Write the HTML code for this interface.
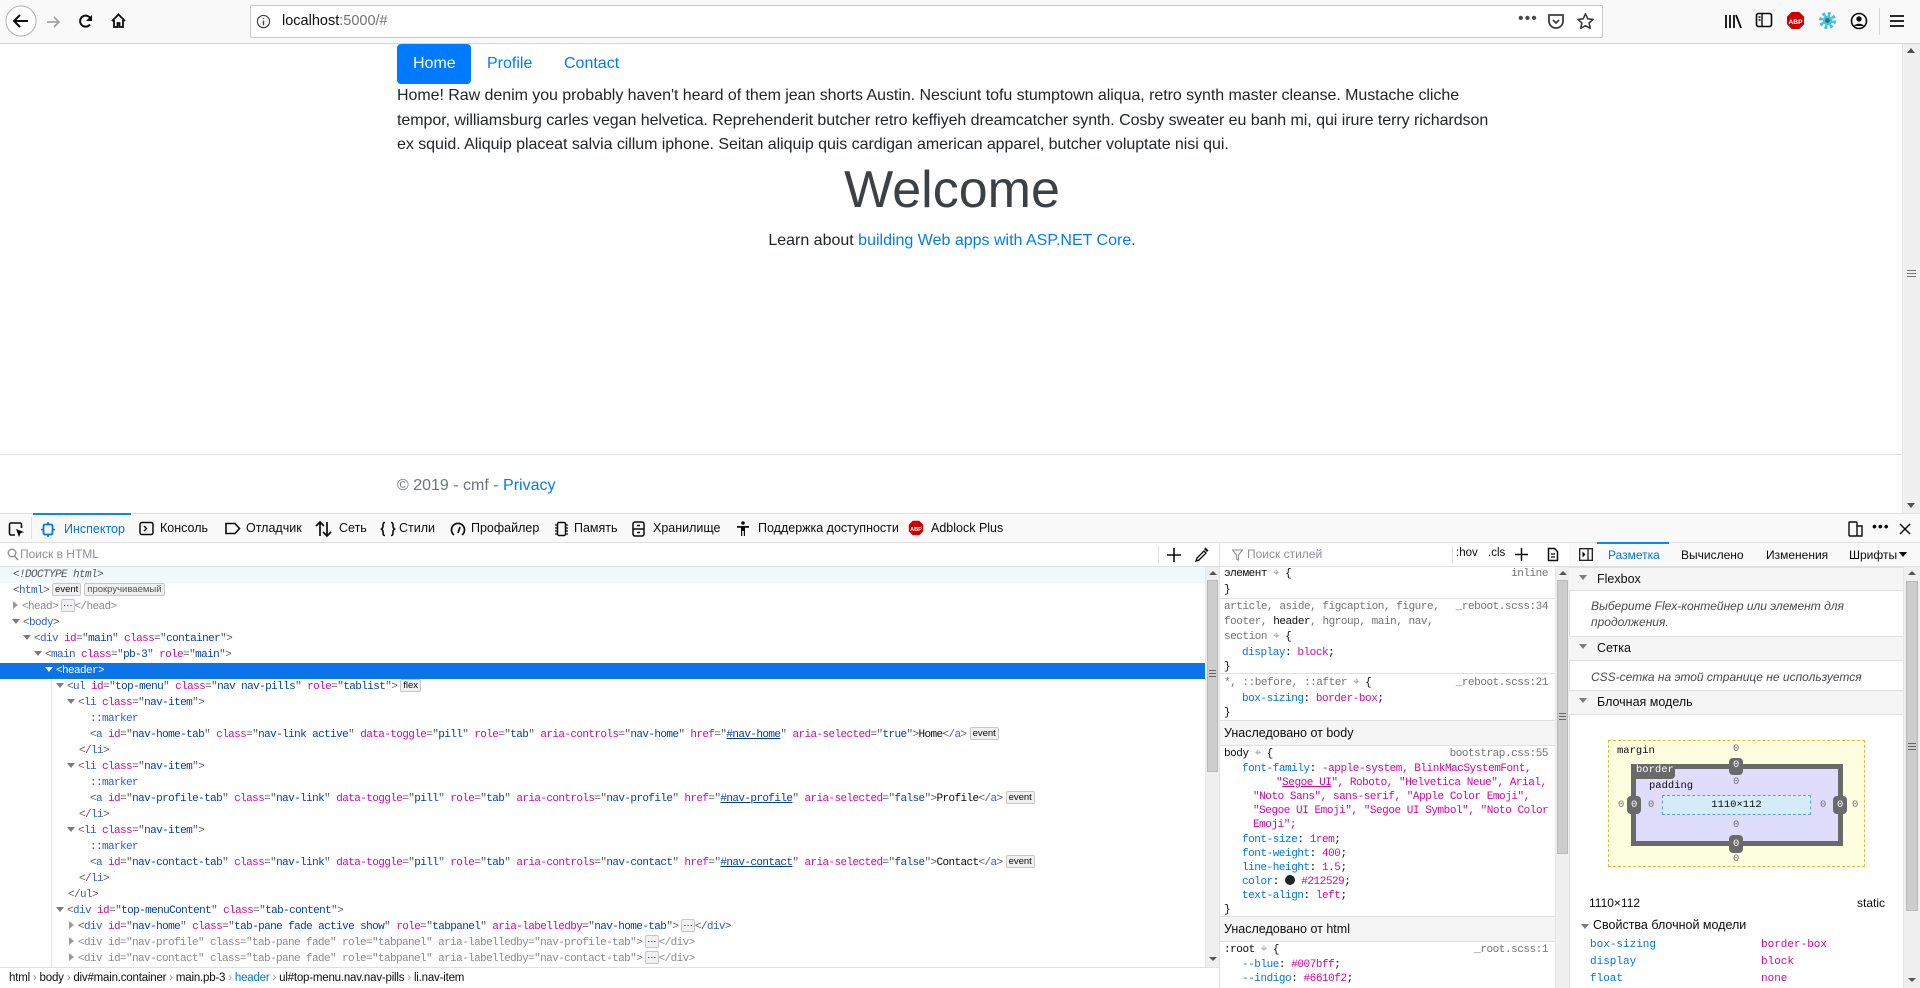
<!DOCTYPE html>
<html><head><meta charset="utf-8">
<style>
*{box-sizing:border-box;margin:0;padding:0}
body{width:1920px;height:988px;overflow:hidden;position:relative;background:#fff;font-family:"Liberation Sans","Noto Sans CJK SC",sans-serif;color:#0c0c0d}
.a{position:absolute}
.mono{font-family:"Liberation Mono","DejaVu Sans Mono",monospace}
#tb{left:0;top:0;width:1920px;height:44px;background:#f9f9fa;border-bottom:1px solid #d7d7db}
#url{left:250px;top:5px;width:1353px;height:33px;background:#fff;border:1px solid #c9c9cc;border-radius:2px}
.ico{position:absolute}
#page{left:0;top:44px;width:1902px;height:469px;background:#fff;font-size:16px;color:#212529}
.pill{position:absolute;top:0;height:40px;line-height:40px;font-size:16px;color:#007bff}
#vs{left:1902px;top:44px;width:18px;height:469px;background:#f0f0f0;border-left:1px solid #e6e6e6}
#dtb{left:0;top:513px;width:1920px;height:30px;background:#f9f9fa;border-top:1px solid #e0e0e2;border-bottom:1px solid #e0e0e2;font-size:12.5px;color:#0c0c0d}
.tab{position:absolute;top:0;height:29px;line-height:29px;white-space:nowrap}
.tab svg{position:absolute;top:7px}
.row{position:absolute;left:0;height:16px;line-height:16px;white-space:nowrap;font-size:11px;letter-spacing:-.6px;color:#585959}
.tg{color:#2e5bd8}.an{color:#dd00a9}.av{color:#003eaa}.gr{color:#8a8a8d}
.badge{display:inline-block;font-family:"Liberation Sans",sans-serif;letter-spacing:0;font-size:9.5px;line-height:11px;padding:0 2px;border:1px solid #c7c7ca;background:#f0f0f2;border-radius:2px;color:#0c0c0d;vertical-align:1px;margin-left:3px}
.tri{display:inline-block;width:0;height:0;border-left:4px solid transparent;border-right:4px solid transparent;border-top:5px solid #7c7c7d;margin-right:3px;vertical-align:1px}
.trr{display:inline-block;width:0;height:0;border-top:4px solid transparent;border-bottom:4px solid transparent;border-left:5px solid #9a9a9d;margin-right:4px;vertical-align:0}
.sl{position:absolute;left:1224px;height:16px;line-height:16px;font-size:11px;letter-spacing:-.45px;white-space:nowrap;color:#0c0c0d}
.pn{color:#0074e8}.pv{color:#dd00a9}.src{position:absolute;right:0;color:#737373}
.hd{position:absolute;left:1220px;width:335px;background:#f5f5f6;border-top:1px solid #e0e0e2;border-bottom:1px solid #e0e0e2;font-size:12.5px;padding-left:4px}
.sec{position:absolute;left:1569px;width:334px;background:#f5f5f6;border-top:1px solid #e0e0e2;border-bottom:1px solid #e0e0e2;font-size:12.5px;padding-left:28px;line-height:18px}
.sec .tri{position:absolute;left:10px;top:7px}
.it{position:absolute;left:1591px;font-style:italic;font-size:12px;color:#4a4a4f;line-height:16px}
.bm{font-family:"Liberation Mono",monospace;font-size:10.5px;position:absolute}
</style></head><body>

<div id="tb" class="a">
  <svg class="ico" style="left:5px;top:5px" width="32" height="32" viewBox="0 0 32 32"><circle cx="16" cy="16" r="15" fill="#fff" stroke="#b1b1b3"/><path d="M23 16H10M15 10l-6 6 6 6" stroke="#0c0c0d" stroke-width="2" fill="none"/></svg>
  <svg class="ico" style="left:45px;top:14px" width="16" height="16" viewBox="0 0 16 16"><path d="M2 8h12M9 3l5 5-5 5" stroke="#a4a4a6" stroke-width="1.8" fill="none"/></svg>
  <svg class="ico" style="left:78px;top:13px" width="16" height="16" viewBox="0 0 16 16"><path d="M13 7A5.5 5.5 0 1 0 12 11.5" stroke="#0c0c0d" stroke-width="2" fill="none"/><path d="M14 2v6H8z" fill="#0c0c0d"/></svg>
  <svg class="ico" style="left:110px;top:12px" width="17" height="17" viewBox="0 0 17 17"><path d="M2 9L8.5 2.5 15 9M4 8v7h3.5v-4h2v4H13V8" stroke="#0c0c0d" stroke-width="1.8" fill="none"/></svg>
  <div id="url" class="a">
    <svg class="ico" style="left:5px;top:8px" width="15" height="15" viewBox="0 0 16 16"><circle cx="8" cy="8" r="6.5" stroke="#3d3d3f" fill="none" stroke-width="1.2"/><path d="M8 7v5M8 4.5v1" stroke="#3d3d3f" stroke-width="1.5"/></svg>
    <div class="a" style="left:31px;top:7px;font-size:14.5px;color:#0c0c0d">localhost<span style="color:#737373">:5000/#</span></div>
    <div class="a" style="left:1267px;top:4px;font-size:16px;color:#4a4a4f;letter-spacing:1px">•••</div>
    <svg class="ico" style="left:1296px;top:7px" width="18" height="17" viewBox="0 0 18 17"><path d="M2 2h14v6a7 7 0 0 1-14 0z" stroke="#3d3d3f" stroke-width="1.8" fill="none"/><path d="M6 7l3 3 3-3" stroke="#3d3d3f" stroke-width="1.8" fill="none"/></svg>
    <svg class="ico" style="left:1325px;top:6px" width="19" height="19" viewBox="0 0 20 20"><path d="M10 2l2.4 5.2 5.6.6-4.2 3.8 1.2 5.6L10 14.4 5 17.2l1.2-5.6L2 7.8l5.6-.6z" stroke="#3d3d3f" stroke-width="1.7" fill="none" stroke-linejoin="round"/></svg>
  </div>
  <svg class="ico" style="left:1724px;top:13px" width="18" height="16" viewBox="0 0 18 16"><path d="M2 2v13M6 2v13M10 2v13M12 2l5 13" stroke="#0c0c0d" stroke-width="1.8"/></svg>
  <svg class="ico" style="left:1755px;top:12px" width="18" height="17" viewBox="0 0 18 17"><rect x="1.5" y="1.5" width="15" height="13" rx="2" stroke="#0c0c0d" stroke-width="1.6" fill="none"/><path d="M7 2v12M3.5 5h2M3.5 8h2" stroke="#0c0c0d" stroke-width="1.4"/></svg>
  <svg class="ico" style="left:1786px;top:11px" width="19" height="19" viewBox="0 0 20 20"><path d="M6 1h8l5 5v8l-5 5H6l-5-5V6z" fill="#d10000"/><text x="10" y="13.5" font-size="7" font-weight="bold" fill="#fff" text-anchor="middle" font-family="Liberation Sans">ABP</text></svg>
  <svg class="ico" style="left:1818px;top:11px" width="19" height="19" viewBox="0 0 20 20"><circle cx="10" cy="10" r="7" fill="none" stroke="#3fc4da" stroke-width="4" stroke-dasharray="3 2.5"/><circle cx="10" cy="10" r="5" fill="#3fc4da"/><circle cx="10" cy="10" r="2.5" fill="#2c6e80"/></svg>
  <svg class="ico" style="left:1850px;top:12px" width="18" height="18" viewBox="0 0 18 18"><circle cx="9" cy="9" r="7.5" stroke="#0c0c0d" stroke-width="1.6" fill="none"/><circle cx="9" cy="7" r="2.7" fill="#0c0c0d"/><path d="M4 14c1.5-3 8.5-3 10 0" fill="#0c0c0d"/></svg>
  <div class="a" style="left:1879px;top:8px;width:1px;height:27px;background:#d7d7db"></div>
  <svg class="ico" style="left:1889px;top:14px" width="16" height="14" viewBox="0 0 16 14"><path d="M1 2h14M1 7h14M1 12h14" stroke="#0c0c0d" stroke-width="1.8"/></svg>
</div>

<div id="page" class="a">
  <div class="a" style="left:397px;top:0;width:74px;height:40px;background:#007bff;border-radius:4px"></div>
  <div class="pill" style="left:413px;color:#fff">Home</div>
  <div class="pill" style="left:487px">Profile</div>
  <div class="pill" style="left:564px">Contact</div>
  <div class="a" style="left:397px;top:40px;line-height:24.5px;font-size:16px;white-space:nowrap;letter-spacing:-.05px">Home! Raw denim you probably haven't heard of them jean shorts Austin. Nesciunt tofu stumptown aliqua, retro synth master cleanse. Mustache cliche<br>tempor, williamsburg carles vegan helvetica. Reprehenderit butcher retro keffiyeh dreamcatcher synth. Cosby sweater eu banh mi, qui irure terry richardson<br>ex squid. Aliquip placeat salvia cillum iphone. Seitan aliquip quis cardigan american apparel, butcher voluptate nisi qui.</div>
  <div class="a" style="left:397px;width:1110px;top:114px;text-align:center;font-size:52px;font-weight:300;line-height:64px;color:#3c4146">Welcome</div>
  <div class="a" style="left:397px;width:1110px;top:185px;text-align:center;font-size:16px;line-height:24px">Learn about <span style="color:#007bff">building Web apps with ASP.NET Core</span>.</div>
  <div class="a" style="left:0;top:410px;width:1902px;height:1px;background:#dee2e6"></div>
  <div class="a" style="left:397px;top:430px;font-size:16px;line-height:24px;color:#6c757d">© 2019 - cmf - <span style="color:#007bff">Privacy</span></div>
</div>
<div id="vs" class="a">
  <div class="a" style="left:4px;top:4px;border-left:4px solid transparent;border-right:4px solid transparent;border-bottom:5px solid #505050"></div>
  <div class="a" style="left:4px;top:459px;border-left:4px solid transparent;border-right:4px solid transparent;border-top:5px solid #505050"></div>
  <div class="a" style="left:4px;top:226px;width:9px;height:1px;background:#777;box-shadow:0 3px 0 #777,0 6px 0 #777"></div>
</div>

<div id="dtb" class="a">
  <svg class="a" style="left:8px;top:7px" width="17" height="17" viewBox="0 0 17 17"><path d="M7 14H3a1.5 1.5 0 0 1-1.5-1.5v-9A1.5 1.5 0 0 1 3 2h9a1.5 1.5 0 0 1 1.5 1.5V7" stroke="#0c0c0d" stroke-width="1.6" fill="none"/><path d="M8 8l8 3-3.5 1.2L11 16z" fill="#0c0c0d"/></svg>
  <div class="a" style="left:31px;top:3px;width:1px;height:22px;background:#e0e0e2"></div>
  <div class="tab" style="left:33px;width:98px;border-top:2px solid #0a84ff;top:-1px;color:#0074e8"><svg style="left:8px" width="14" height="15" viewBox="0 0 14 15"><rect x="2.5" y="2.5" width="9" height="10" rx="1.5" stroke="#0074e8" stroke-width="1.8" fill="none"/><path d="M7 0v2.5M7 12.5V15M0 7.5h2.5M11.5 7.5H14" stroke="#0074e8" stroke-width="1.6"/></svg><span style="position:absolute;left:31px">Инспектор</span></div>
  <div class="tab" style="left:139px"><svg style="left:0" width="15" height="15" viewBox="0 0 15 15"><rect x="1" y="1.5" width="13" height="12" rx="2" stroke="#0c0c0d" stroke-width="1.5" fill="none"/><path d="M5 5l2.5 2.5L5 10" stroke="#0c0c0d" stroke-width="1.4" fill="none"/></svg><span style="position:absolute;left:21px">Консоль</span></div>
  <div class="tab" style="left:224px"><svg style="left:0" width="17" height="15" viewBox="0 0 17 15"><path d="M2 2.5h9l4.5 5-4.5 5H2z" stroke="#0c0c0d" stroke-width="1.6" fill="none"/></svg><span style="position:absolute;left:22px">Отладчик</span></div>
  <div class="tab" style="left:315px"><svg style="left:0" width="17" height="16" viewBox="0 0 17 16"><path d="M5 15V1M1 5l4-4 4 4M12 1v14M8 11l4 4 4-4" stroke="#0c0c0d" stroke-width="1.7" fill="none"/></svg><span style="position:absolute;left:24px">Сеть</span></div>
  <div class="tab" style="left:380px"><svg style="left:0" width="16" height="16" viewBox="0 0 16 16"><path d="M5 1.5C3 1.5 3 3 3 5s-1.5 3-1.5 3S3 9 3 11s0 3.5 2 3.5M11 1.5c2 0 2 1.5 2 3.5s1.5 3 1.5 3S13 9 13 11s0 3.5-2 3.5" stroke="#0c0c0d" stroke-width="1.6" fill="none"/></svg><span style="position:absolute;left:19px">Стили</span></div>
  <div class="tab" style="left:450px"><svg style="left:0" width="16" height="16" viewBox="0 0 16 16"><path d="M4 14A6.5 6.5 0 1 1 12 14" stroke="#0c0c0d" stroke-width="1.7" fill="none"/><path d="M8 12l2-6" stroke="#0c0c0d" stroke-width="1.7"/></svg><span style="position:absolute;left:21px">Профайлер</span></div>
  <div class="tab" style="left:554px"><svg style="left:0" width="15" height="16" viewBox="0 0 15 16"><rect x="3.5" y="1.5" width="8" height="13" rx="1.5" stroke="#0c0c0d" stroke-width="1.5" fill="none"/><path d="M1 4h2M1 7h2M1 10h2M1 13h2M12 4h2M12 7h2M12 10h2M12 13h2" stroke="#0c0c0d" stroke-width="1.2"/></svg><span style="position:absolute;left:20px">Память</span></div>
  <div class="tab" style="left:632px"><svg style="left:0" width="13" height="16" viewBox="0 0 13 16"><rect x="1" y="1" width="11" height="14" rx="2" stroke="#0c0c0d" stroke-width="1.5" fill="none"/><path d="M1 8h11M5 4.5h3M5 11.5h3" stroke="#0c0c0d" stroke-width="1.4"/></svg><span style="position:absolute;left:21px">Хранилище</span></div>
  <div class="tab" style="left:736px"><svg style="left:0" width="14" height="16" viewBox="0 0 14 16"><circle cx="7" cy="2" r="1.8" fill="#0c0c0d"/><path d="M1 5h12v1.8H9V15H7.8v-5H6.2v5H5V6.8H1z" fill="#0c0c0d"/></svg><span style="position:absolute;left:22px">Поддержка доступности</span></div>
  <div class="tab" style="left:908px"><svg style="left:0;top:6px" width="16" height="16" viewBox="0 0 20 20"><path d="M6 1h8l5 5v8l-5 5H6l-5-5V6z" fill="#d10000"/><text x="10" y="13.5" font-size="7" font-weight="bold" fill="#fff" text-anchor="middle" font-family="Liberation Sans">ABP</text></svg><span style="position:absolute;left:23px">Adblock Plus</span></div>
  <svg class="a" style="left:1848px;top:7px" width="15" height="16" viewBox="0 0 15 16"><rect x="1" y="1" width="8" height="14" rx="1" stroke="#0c0c0d" stroke-width="1.4" fill="none"/><path d="M9 5h5v10H9" stroke="#0c0c0d" stroke-width="1.4" fill="none"/></svg>
  <div class="a" style="left:1872px;top:4px;font-size:14px;letter-spacing:1px">•••</div>
  <svg class="a" style="left:1899px;top:9px" width="12" height="12" viewBox="0 0 12 12"><path d="M1 1l10 10M11 1L1 11" stroke="#0c0c0d" stroke-width="1.5"/></svg>
</div>

<div class="a" style="left:0;top:543px;width:1219px;height:445px;background:#fff"></div>
<div class="a" style="left:0;top:543px;width:1219px;height:24px;border-bottom:1px solid #e0e0e2">
  <svg class="a" style="left:7px;top:5px" width="12" height="13" viewBox="0 0 12 13"><circle cx="5" cy="5" r="3.8" stroke="#8f8f9d" stroke-width="1.4" fill="none"/><path d="M7.5 8l3.5 4" stroke="#8f8f9d" stroke-width="1.6"/></svg>
  <div class="a" style="left:20px;top:4px;font-size:12px;color:#8f8f9d">Поиск в HTML</div>
  <div class="a" style="left:1158px;top:3px;width:1px;height:17px;background:#e0e0e2"></div>
  <svg class="a" style="left:1167px;top:5px" width="14" height="14" viewBox="0 0 14 14"><path d="M7 0v14M0 7h14" stroke="#0c0c0d" stroke-width="1.6"/></svg>
  <svg class="a" style="left:1195px;top:4px" width="15" height="15" viewBox="0 0 15 15"><path d="M1 14l1-3 7-7 2 2-7 7z" stroke="#0c0c0d" stroke-width="1.3" fill="none"/><path d="M9 2l1.5-1.5 3 3L12 5z" fill="#0c0c0d"/></svg>
</div>
<div class="a mono" style="left:0;top:567px;width:1205px;height:400px;overflow:hidden">
  <div class="row" style="top:0;width:1205px;background:#f0f9fe;padding-left:13px;font-style:italic">&lt;!DOCTYPE html&gt;</div>
  <div class="row" style="top:16px;padding-left:13px">&lt;<span class="tg">html</span>&gt;<span class="badge">event</span><span class="badge" style="color:#555">прокручиваемый</span></div>
  <div class="row" style="top:32px;padding-left:13px"><span class="trr"></span><span class="gr">&lt;head&gt;</span><span class="badge" style="padding:0 1px">···</span><span class="gr">&lt;/head&gt;</span></div>
  <div class="row" style="top:48px;padding-left:12px"><span class="tri"></span>&lt;<span class="tg">body</span>&gt;</div>
  <div class="row" style="top:64px;padding-left:23px"><span class="tri"></span>&lt;<span class="tg">div</span> <span class="an">id</span>="<span class="av">main</span>" <span class="an">class</span>="<span class="av">container</span>"&gt;</div>
  <div class="row" style="top:80px;padding-left:34px"><span class="tri"></span>&lt;<span class="tg">main</span> <span class="an">class</span>="<span class="av">pb-3</span>" <span class="an">role</span>="<span class="av">main</span>"&gt;</div>
  <div class="row" style="top:96px;width:1205px;background:#0a74e8;color:#fff;padding-left:45px"><span class="tri" style="border-top-color:#fff"></span>&lt;header&gt;</div>
  <div class="row" style="top:112px;padding-left:56px"><span class="tri"></span>&lt;<span class="tg">ul</span> <span class="an">id</span>="<span class="av">top-menu</span>" <span class="an">class</span>="<span class="av">nav nav-pills</span>" <span class="an">role</span>="<span class="av">tablist</span>"&gt;<span class="badge">flex</span></div>
  <div class="row" style="top:128px;padding-left:67px"><span class="tri"></span>&lt;<span class="tg">li</span> <span class="an">class</span>="<span class="av">nav-item</span>"&gt;</div>
  <div class="row" style="top:144px;padding-left:90px"><span class="tg">::marker</span></div>
  <div class="row" style="top:160px;padding-left:90px">&lt;<span class="tg">a</span> <span class="an">id</span>="<span class="av">nav-home-tab</span>" <span class="an">class</span>="<span class="av">nav-link active</span>" <span class="an">data-toggle</span>="<span class="av">pill</span>" <span class="an">role</span>="<span class="av">tab</span>" <span class="an">aria-controls</span>="<span class="av">nav-home</span>" <span class="an">href</span>="<span class="av" style="text-decoration:underline">#nav-home</span>" <span class="an">aria-selected</span>="<span class="av">true</span>"&gt;<span style="color:#0c0c0d">Home</span>&lt;/<span class="tg">a</span>&gt;<span class="badge">event</span></div>
  <div class="row" style="top:176px;padding-left:79px">&lt;/<span class="tg">li</span>&gt;</div>
  <div class="row" style="top:192px;padding-left:67px"><span class="tri"></span>&lt;<span class="tg">li</span> <span class="an">class</span>="<span class="av">nav-item</span>"&gt;</div>
  <div class="row" style="top:208px;padding-left:90px"><span class="tg">::marker</span></div>
  <div class="row" style="top:224px;padding-left:90px">&lt;<span class="tg">a</span> <span class="an">id</span>="<span class="av">nav-profile-tab</span>" <span class="an">class</span>="<span class="av">nav-link</span>" <span class="an">data-toggle</span>="<span class="av">pill</span>" <span class="an">role</span>="<span class="av">tab</span>" <span class="an">aria-controls</span>="<span class="av">nav-profile</span>" <span class="an">href</span>="<span class="av" style="text-decoration:underline">#nav-profile</span>" <span class="an">aria-selected</span>="<span class="av">false</span>"&gt;<span style="color:#0c0c0d">Profile</span>&lt;/<span class="tg">a</span>&gt;<span class="badge">event</span></div>
  <div class="row" style="top:240px;padding-left:79px">&lt;/<span class="tg">li</span>&gt;</div>
  <div class="row" style="top:256px;padding-left:67px"><span class="tri"></span>&lt;<span class="tg">li</span> <span class="an">class</span>="<span class="av">nav-item</span>"&gt;</div>
  <div class="row" style="top:272px;padding-left:90px"><span class="tg">::marker</span></div>
  <div class="row" style="top:288px;padding-left:90px">&lt;<span class="tg">a</span> <span class="an">id</span>="<span class="av">nav-contact-tab</span>" <span class="an">class</span>="<span class="av">nav-link</span>" <span class="an">data-toggle</span>="<span class="av">pill</span>" <span class="an">role</span>="<span class="av">tab</span>" <span class="an">aria-controls</span>="<span class="av">nav-contact</span>" <span class="an">href</span>="<span class="av" style="text-decoration:underline">#nav-contact</span>" <span class="an">aria-selected</span>="<span class="av">false</span>"&gt;<span style="color:#0c0c0d">Contact</span>&lt;/<span class="tg">a</span>&gt;<span class="badge">event</span></div>
  <div class="row" style="top:304px;padding-left:79px">&lt;/<span class="tg">li</span>&gt;</div>
  <div class="row" style="top:320px;padding-left:68px">&lt;/<span class="tg">ul</span>&gt;</div>
  <div class="row" style="top:336px;padding-left:56px"><span class="tri"></span>&lt;<span class="tg">div</span> <span class="an">id</span>="<span class="av">top-menuContent</span>" <span class="an">class</span>="<span class="av">tab-content</span>"&gt;</div>
  <div class="row" style="top:352px;padding-left:69px"><span class="trr"></span>&lt;<span class="tg">div</span> <span class="an">id</span>="<span class="av">nav-home</span>" <span class="an">class</span>="<span class="av">tab-pane fade active show</span>" <span class="an">role</span>="<span class="av">tabpanel</span>" <span class="an">aria-labelledby</span>="<span class="av">nav-home-tab</span>"&gt;<span class="badge" style="padding:0 1px">···</span>&lt;/<span class="tg">div</span>&gt;</div>
  <div class="row gr" style="top:368px;padding-left:69px;color:#8a8a8d"><span class="trr"></span>&lt;div id="nav-profile" class="tab-pane fade" role="tabpanel" aria-labelledby="nav-profile-tab"&gt;<span class="badge" style="padding:0 1px">···</span>&lt;/div&gt;</div>
  <div class="row gr" style="top:384px;padding-left:69px;color:#8a8a8d"><span class="trr"></span>&lt;div id="nav-contact" class="tab-pane fade" role="tabpanel" aria-labelledby="nav-contact-tab"&gt;<span class="badge" style="padding:0 1px">···</span>&lt;/div&gt;</div>
  <div class="a" style="left:51px;top:112px;width:1px;height:290px;background:#e3e3e6"></div>
</div>
<div class="a" style="left:1205px;top:567px;width:14px;height:400px;background:#f0f0f0;border-left:1px solid #e6e6e6">
  <div class="a" style="left:3px;top:4px;border-left:4px solid transparent;border-right:4px solid transparent;border-bottom:4px solid #555"></div>
  <div class="a" style="left:1px;top:13px;width:11px;height:192px;background:#cdcdcd;border:1px solid #b8b8b8"></div>
  <div class="a" style="left:3px;top:103px;width:7px;height:1px;background:#666;box-shadow:0 3px 0 #666,0 6px 0 #666"></div>
  <div class="a" style="left:3px;top:390px;border-left:4px solid transparent;border-right:4px solid transparent;border-top:4px solid #555"></div>
</div>
<div class="a" style="left:0;top:967px;width:1219px;height:21px;border-top:1px solid #e0e0e2;background:#fff;font-size:11.5px;line-height:20px;color:#0c0c0d;padding-left:9px;white-space:nowrap;letter-spacing:-.2px">html <span style="color:#999">›</span> body <span style="color:#999">›</span> div#main.container <span style="color:#999">›</span> main.pb-3 <span style="color:#999">›</span> <span style="color:#0074e8">header</span> <span style="color:#999">›</span> ul#top-menu.nav.nav-pills <span style="color:#999">›</span> li.nav-item</div>

<div class="a" style="left:1219px;top:543px;width:1px;height:445px;background:#e0e0e2"></div>
<div class="a" style="left:1220px;top:543px;width:349px;height:24px;border-bottom:1px solid #e0e0e2">
  <svg class="a" style="left:12px;top:6px" width="11" height="12" viewBox="0 0 11 12"><path d="M.5 1h10L6.5 6v5L4.5 10V6z" stroke="#8f8f9d" stroke-width="1.1" fill="none"/></svg>
  <div class="a" style="left:27px;top:4px;font-size:12px;color:#8f8f9d">Поиск стилей</div>
  <div class="a" style="left:232px;top:3px;width:1px;height:17px;background:#e0e0e2"></div>
  <div class="a" style="left:236px;top:4px;font-size:11.5px">:hov</div>
  <div class="a" style="left:268px;top:4px;font-size:11.5px">.cls</div>
  <svg class="a" style="left:295px;top:5px" width="13" height="13" viewBox="0 0 14 14"><path d="M7 0v14M0 7h14" stroke="#0c0c0d" stroke-width="1.6"/></svg>
  <svg class="a" style="left:327px;top:4px" width="12" height="15" viewBox="0 0 12 15"><path d="M1.5 1.5h6l3 3v9h-9z" stroke="#0c0c0d" stroke-width="1.5" fill="none"/><path d="M4 7h4M4 10h4" stroke="#0c0c0d" stroke-width="1.2"/></svg>
</div>
<div class="a mono" style="left:0;top:0;width:1555px;height:988px;overflow:hidden;pointer-events:none">
  <div class="sl" style="top:566px;width:324px">элемент <span style="color:#999">⌖</span> {<span class="src">inline</span></div>
  <div class="sl" style="top:582px">}</div>
  <div class="a" style="left:1220px;top:598px;width:335px;height:1px;background:#e0e0e2"></div>
  <div class="sl" style="top:599px;width:324px;color:#737373">article, aside, figcaption, figure,<span class="src">_reboot.scss:34</span></div>
  <div class="sl" style="top:614px;color:#737373">footer, <span style="color:#0c0c0d">header</span>, hgroup, main, nav,</div>
  <div class="sl" style="top:629px;color:#737373">section <span style="color:#999">⌖</span> <span style="color:#0c0c0d">{</span></div>
  <div class="sl" style="top:645px;padding-left:18px"><span class="pn">display</span>: <span class="pv">block</span>;</div>
  <div class="sl" style="top:659px">}</div>
  <div class="a" style="left:1220px;top:673px;width:335px;height:1px;background:#e0e0e2"></div>
  <div class="sl" style="top:675px;width:324px;color:#737373">*, ::before, ::after <span style="color:#999">⌖</span> <span style="color:#0c0c0d">{</span><span class="src">_reboot.scss:21</span></div>
  <div class="sl" style="top:691px;padding-left:18px"><span class="pn">box-sizing</span>: <span class="pv">border-box</span>;</div>
  <div class="sl" style="top:705px">}</div>
  <div class="hd" style="top:720px;height:26px;line-height:24px;font-family:'Liberation Sans',sans-serif">Унаследовано от body</div>
  <div class="sl" style="top:746px;width:324px">body <span style="color:#999">⌖</span> {<span class="src">bootstrap.css:55</span></div>
  <div class="sl" style="top:761px;padding-left:18px"><span class="pn">font-family</span>: <span class="pv">-apple-system, BlinkMacSystemFont,</span></div>
  <div class="sl pv" style="top:775px;padding-left:52px">"<u>Segoe UI</u>", Roboto, "Helvetica Neue", Arial,</div>
  <div class="sl pv" style="top:789px;padding-left:29px">"Noto Sans", sans-serif, "Apple Color Emoji",</div>
  <div class="sl pv" style="top:803px;padding-left:29px">"Segoe UI Emoji", "Segoe UI Symbol", "Noto Color</div>
  <div class="sl pv" style="top:817px;padding-left:29px">Emoji";</div>
  <div class="sl" style="top:832px;padding-left:18px"><span class="pn">font-size</span>: <span class="pv">1rem</span>;</div>
  <div class="sl" style="top:846px;padding-left:18px"><span class="pn">font-weight</span>: <span class="pv">400</span>;</div>
  <div class="sl" style="top:860px;padding-left:18px"><span class="pn">line-height</span>: <span class="pv">1.5</span>;</div>
  <div class="sl" style="top:874px;padding-left:18px"><span class="pn">color</span>: <span style="display:inline-block;width:10px;height:10px;border-radius:50%;background:#212529;vertical-align:-1px"></span> <span class="pv">#212529</span>;</div>
  <div class="sl" style="top:888px;padding-left:18px"><span class="pn">text-align</span>: <span class="pv">left</span>;</div>
  <div class="sl" style="top:902px">}</div>
  <div class="hd" style="top:916px;height:26px;line-height:24px;font-family:'Liberation Sans',sans-serif">Унаследовано от html</div>
  <div class="sl" style="top:942px;width:324px">:root <span style="color:#999">⌖</span> {<span class="src">_root.scss:1</span></div>
  <div class="sl" style="top:957px;padding-left:18px"><span class="pn">--blue</span>: <span class="pv">#007bff</span>;</div>
  <div class="sl" style="top:971px;padding-left:18px"><span class="pn">--indigo</span>: <span class="pv">#6610f2</span>;</div>
</div>
<div class="a" style="left:1555px;top:567px;width:14px;height:421px;background:#f0f0f0;border-left:1px solid #e6e6e6">
  <div class="a" style="left:3px;top:4px;border-left:4px solid transparent;border-right:4px solid transparent;border-bottom:4px solid #555"></div>
  <div class="a" style="left:1px;top:13px;width:11px;height:274px;background:#cdcdcd;border:1px solid #b8b8b8"></div>
  <div class="a" style="left:3px;top:146px;width:7px;height:1px;background:#666;box-shadow:0 3px 0 #666,0 6px 0 #666"></div>
</div>

<div class="a" style="left:1569px;top:543px;width:351px;height:445px;background:#fff;border-left:1px solid #e0e0e2"></div>
<div class="a" style="left:1569px;top:543px;width:351px;height:24px;background:#f9f9fa;border-bottom:1px solid #e0e0e2;font-size:12px;line-height:22px">
  <svg class="a" style="left:10px;top:5px" width="14" height="13" viewBox="0 0 14 13"><rect x=".7" y=".7" width="12.6" height="11.6" stroke="#0c0c0d" stroke-width="1.2" fill="none"/><path d="M9 1v11" stroke="#0c0c0d" stroke-width="1.2"/><path d="M3.5 3.5l3 3-3 3z" fill="#0c0c0d"/></svg>
  <div class="a" style="left:28px;top:-1px;width:72px;height:2px;background:#0a84ff"></div>
  <div class="a" style="left:39px;top:1px;color:#0074e8">Разметка</div>
  <div class="a" style="left:112px;top:1px">Вычислено</div>
  <div class="a" style="left:197px;top:1px">Изменения</div>
  <div class="a" style="left:280px;top:1px">Шрифты</div>
  <div class="a" style="left:330px;top:9px;border-left:4px solid transparent;border-right:4px solid transparent;border-top:5px solid #0c0c0d"></div>
</div>
<div class="sec" style="top:567px;height:24px;line-height:22px"><span class="tri"></span>Flexbox</div>
<div class="it" style="top:598px">Выберите Flex-контейнер или элемент для<br>продолжения.</div>
<div class="sec" style="top:636px;height:25px;line-height:23px"><span class="tri"></span>Сетка</div>
<div class="it" style="top:669px">CSS-сетка на этой странице не используется</div>
<div class="sec" style="top:690px;height:25px;line-height:23px"><span class="tri"></span>Блочная модель</div>
<div class="a" style="left:1608px;top:740px;width:257px;height:127px;background:#fdfde0;border:1px dashed #c8c83a"></div>
<div class="bm" style="left:1617px;top:745px;color:#0c0c0d">margin</div>
<div class="bm" style="left:1733px;top:743px;color:#737373">0</div>
<div class="a" style="left:1631px;top:764px;width:212px;height:82px;background:#e0dcfb;border:5px solid #6a6a6a"></div>
<div class="a" style="left:1631px;top:764px;width:44px;height:15px;background:#6a6a6a;border-radius:0 0 4px 0"></div>
<div class="bm" style="left:1636px;top:764px;color:#fff">border</div>
<div class="a" style="left:1729px;top:758px;width:14px;height:17px;background:#6a6a6a;border-radius:4px"></div>
<div class="bm" style="left:1733px;top:759px;color:#fff">0</div>
<div class="bm" style="left:1649px;top:780px;color:#0c0c0d">padding</div>
<div class="bm" style="left:1733px;top:776px;color:#737373">0</div>
<div class="a" style="left:1662px;top:795px;width:149px;height:20px;background:#d3ecf8;border:1px dashed #5a9ff0"></div>
<div class="bm" style="left:1662px;width:149px;text-align:center;top:799px;color:#0c0c0d">1110×112</div>
<div class="bm" style="left:1618px;top:799px;color:#737373">0</div>
<div class="a" style="left:1627px;top:796px;width:14px;height:18px;background:#6a6a6a;border-radius:4px"></div>
<div class="bm" style="left:1631px;top:799px;color:#fff">0</div>
<div class="bm" style="left:1648px;top:799px;color:#737373">0</div>
<div class="bm" style="left:1820px;top:799px;color:#737373">0</div>
<div class="a" style="left:1833px;top:796px;width:14px;height:18px;background:#6a6a6a;border-radius:4px"></div>
<div class="bm" style="left:1837px;top:799px;color:#fff">0</div>
<div class="bm" style="left:1852px;top:799px;color:#737373">0</div>
<div class="bm" style="left:1733px;top:819px;color:#737373">0</div>
<div class="a" style="left:1729px;top:835px;width:14px;height:18px;background:#6a6a6a;border-radius:4px"></div>
<div class="bm" style="left:1733px;top:838px;color:#fff">0</div>
<div class="bm" style="left:1733px;top:853px;color:#737373">0</div>
<div class="a" style="left:1589px;top:896px;font-size:12px;color:#0c0c0d">1110×112</div>
<div class="a" style="left:1857px;top:896px;font-size:12px;color:#0c0c0d">static</div>
<div class="a" style="left:1581px;top:918px;font-size:12.5px;color:#0c0c0d;padding-left:12px"><span class="tri" style="position:absolute;left:0;top:6px"></span>Свойства блочной модели</div>
<div class="bm" style="left:1590px;top:939px;font-size:11px;color:#0074e8">box-sizing</div>
<div class="bm" style="left:1761px;top:939px;font-size:11px;color:#dd00a9">border-box</div>
<div class="bm" style="left:1590px;top:956px;font-size:11px;color:#0074e8">display</div>
<div class="bm" style="left:1761px;top:956px;font-size:11px;color:#dd00a9">block</div>
<div class="bm" style="left:1590px;top:973px;font-size:11px;color:#0074e8">float</div>
<div class="bm" style="left:1761px;top:973px;font-size:11px;color:#dd00a9">none</div>
<div class="a" style="left:1903px;top:567px;width:17px;height:421px;background:#f0f0f0;border-left:1px solid #e6e6e6">
  <div class="a" style="left:4px;top:4px;border-left:4px solid transparent;border-right:4px solid transparent;border-bottom:4px solid #555"></div>
  <div class="a" style="left:2px;top:14px;width:12px;height:330px;background:#cdcdcd;border:1px solid #b8b8b8"></div>
  <div class="a" style="left:4px;top:176px;width:8px;height:1px;background:#666;box-shadow:0 3px 0 #666,0 6px 0 #666"></div>
  <div class="a" style="left:4px;top:411px;border-left:4px solid transparent;border-right:4px solid transparent;border-top:4px solid #555"></div>
</div>
</body></html>
